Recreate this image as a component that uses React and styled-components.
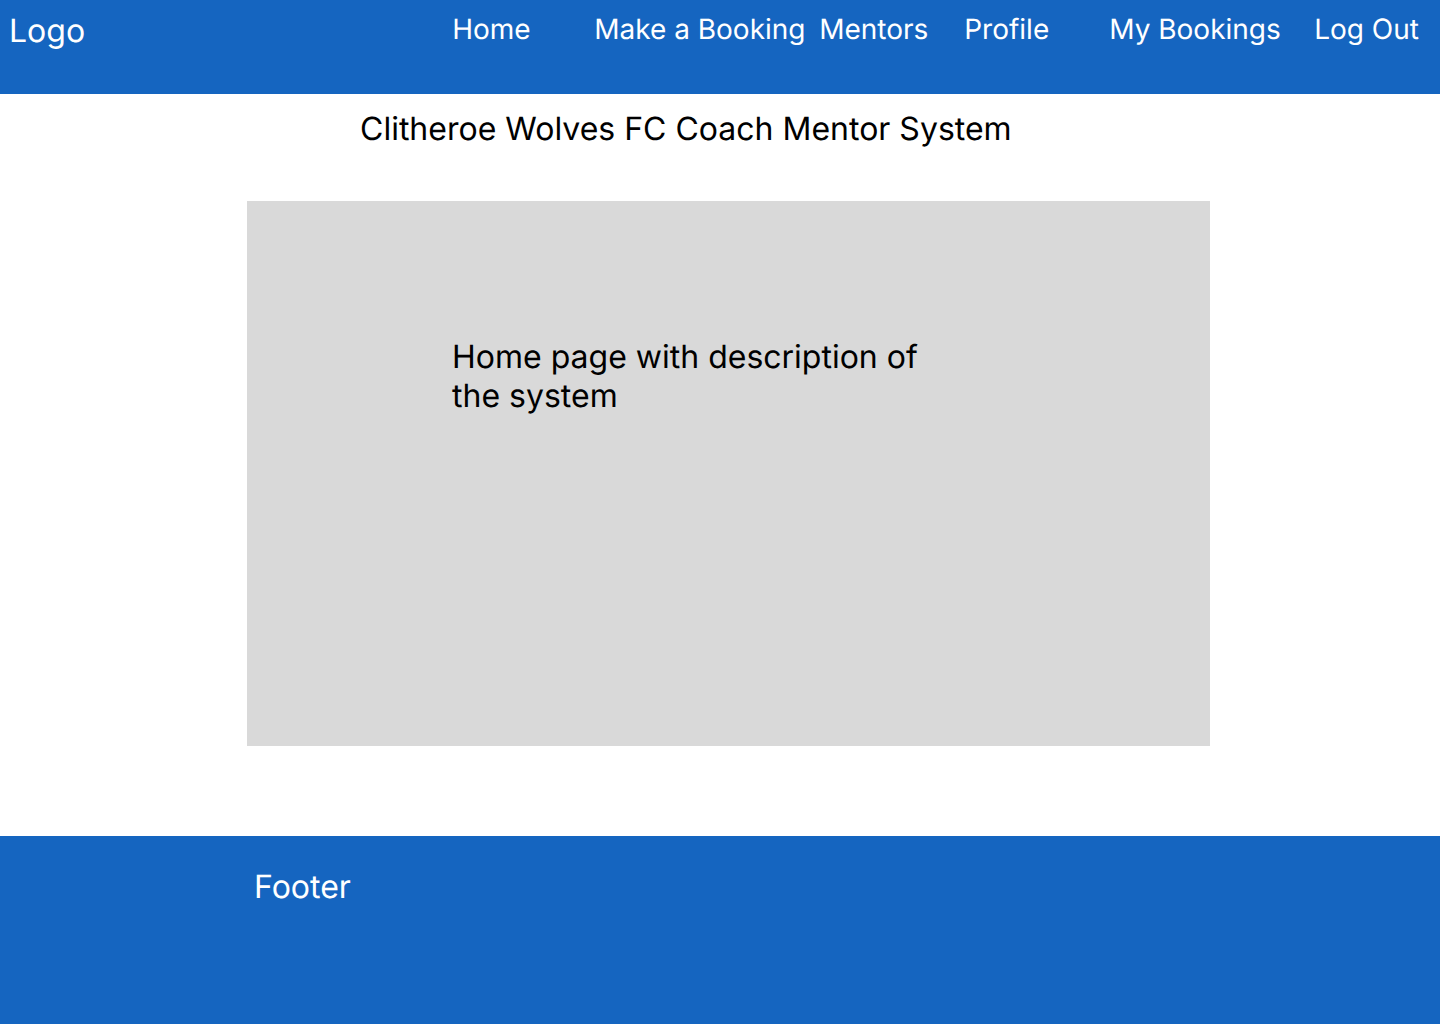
import React from 'react';
import styled, { createGlobalStyle } from 'styled-components';

const GlobalStyle = createGlobalStyle`
  *, *::before, *::after { box-sizing: border-box; }
  html, body, #root { height: 100%; }
  body {
    margin: 0;
    background: #ffffff;
    color: #000000;
    font-family: Inter, "Liberation Sans", sans-serif;
    font-size: 32px;
    line-height: 39px;
    text-rendering: geometricPrecision;
  }
`;

const Page = styled.div`
  min-height: 100%;
  display: flex;
  flex-direction: column;
`;

const Header = styled.header`
  display: flex;
  justify-content: space-between;
  min-height: 94px;
  padding: 11px 21px 0 9px;
  background: #1565c0;
  color: #ffffff;
`;

const Logo = styled.a`
  color: inherit;
  text-decoration: none;
`;

const Nav = styled.nav`
  display: flex;
  font-size: 28px;
  line-height: 36px;
`;

const NavLink = styled.a`
  min-width: ${({ $slot }) => ($slot ? `${$slot}px` : 'auto')};
  color: inherit;
  text-decoration: none;
  white-space: nowrap;
`;

const Main = styled.main`
  flex: 1;
  display: flex;
  flex-direction: column;
  padding: 15px 230px 90px 247px;
`;

const Title = styled.h1`
  margin: 0 0 53px;
  padding-left: 113px;
  font-size: inherit;
  font-weight: 400;
`;

const Panel = styled.section`
  flex: 1;
  min-height: 300px;
  padding: 136px 205px;
  background: #d9d9d9;
`;

const Description = styled.p`
  max-width: 505px;
  margin: 0;
`;

const Footer = styled.footer`
  min-height: 188px;
  padding: 31px 254px;
  background: #1565c0;
  color: #ffffff;
`;

const links = [
  { label: 'Home', slot: 142 },
  { label: 'Make a Booking', slot: 225 },
  { label: 'Mentors', slot: 145 },
  { label: 'Profile', slot: 145 },
  { label: 'My Bookings', slot: 205 },
  { label: 'Log Out' },
];

export default function App() {
  return (
    <>
      <GlobalStyle />
      <Page>
        <Header>
          <Logo href="#home">Logo</Logo>
          <Nav aria-label="Main">
            {links.map(({ label, slot }) => (
              <NavLink key={label} href="#" $slot={slot}>{label}</NavLink>
            ))}
          </Nav>
        </Header>
        <Main>
          <Title>Clitheroe Wolves FC Coach Mentor System</Title>
          <Panel>
            <Description>Home page with description of the system</Description>
          </Panel>
        </Main>
        <Footer>Footer</Footer>
      </Page>
    </>
  );
}
